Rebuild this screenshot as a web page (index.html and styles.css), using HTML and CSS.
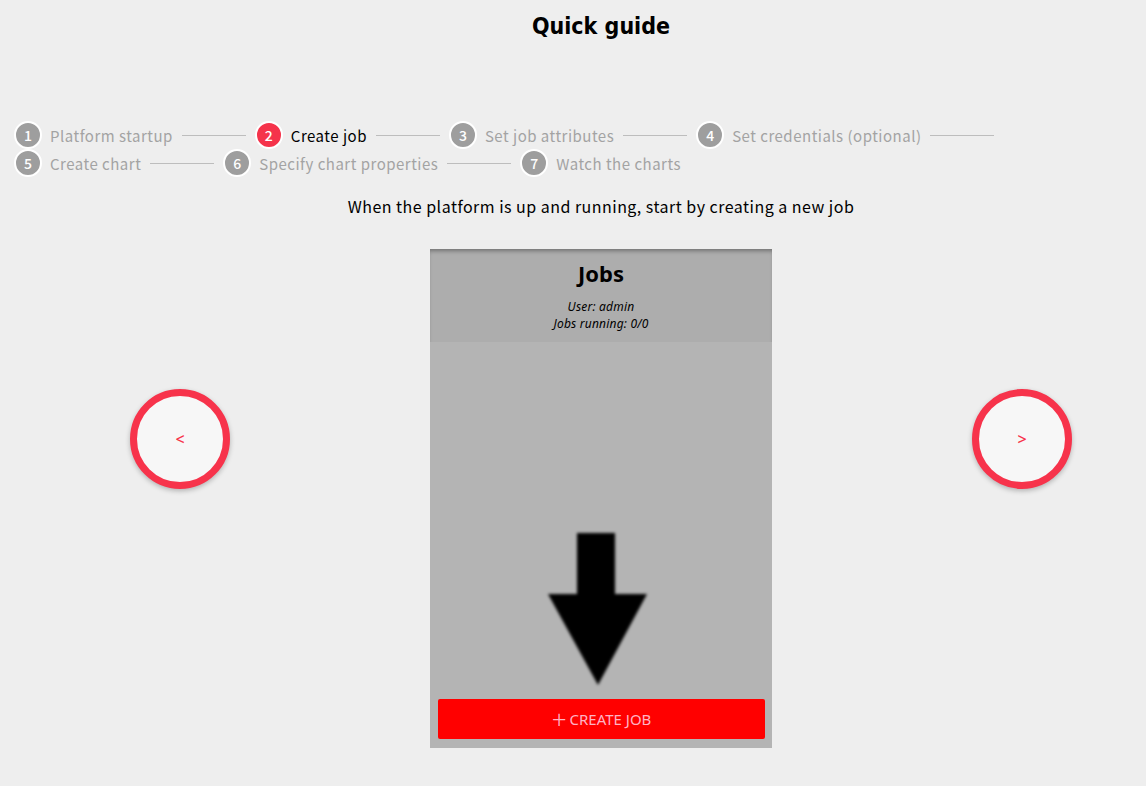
FILE: index.html
```html
<!DOCTYPE html>
<html>
<head>
<meta charset="utf-8">
<link rel="stylesheet" href="styles.css">
</head>
<body>
<div class="page">
  <h1 class="title">Quick guide</h1>
  <ol class="stepper">
    <li class="step"><span class="num">1</span><span class="label">Platform startup</span><span class="line"></span></li>
    <li class="step active"><span class="num">2</span><span class="label">Create job</span><span class="line"></span></li>
    <li class="step"><span class="num">3</span><span class="label">Set job attributes</span><span class="line"></span></li>
    <li class="step"><span class="num">4</span><span class="label">Set credentials (optional)</span><span class="line"></span></li>
    <li class="step"><span class="num">5</span><span class="label">Create chart</span><span class="line"></span></li>
    <li class="step"><span class="num">6</span><span class="label">Specify chart properties</span><span class="line"></span></li>
    <li class="step last"><span class="num">7</span><span class="label">Watch the charts</span></li>
  </ol>
  <div class="main">
    <p class="desc">When the platform is up and running, start by creating a new job</p>
    <div class="carousel">
      <button class="nav">&lt;</button>
      <div class="shot">
        <div class="shot-head">
          <div class="shot-title">Jobs</div>
          <div class="shot-meta">User: admin</div>
          <div class="shot-meta">Jobs running: 0/0</div>
        </div>
        <div class="shot-body">
          <svg class="arrow" width="120" height="170" viewBox="0 0 120 170">
            <polygon points="43,6 81,6 81,67 113,67 64,158 14,67 43,67" fill="#000"/>
          </svg>
          <div class="create-btn"><span class="plus">+</span>CREATE JOB</div>
        </div>
      </div>
      <button class="nav">&gt;</button>
    </div>
  </div>
</div>
</body>
</html>
```

FILE: styles.css
```css
html, body {
  margin: 0;
  padding: 0;
  background: #eeeeee;
}
body {
  font-family: "Noto Sans CJK JP", "Noto Sans", sans-serif;
  color: #000;
  width: 1146px;
  height: 786px;
  overflow: hidden;
}
.title {
  margin: 0;
  padding: 10px 0 0 56px;
  height: 32px;
  line-height: 32px;
  text-align: center;
  font-size: 23px;
  font-weight: 700;
  font-family: "DejaVu Sans Condensed", "DejaVu Sans", sans-serif;
}
.stepper {
  list-style: none;
  margin: 79px 0 0 0;
  padding: 0 14px;
  display: flex;
  flex-wrap: wrap;
}
.step {
  display: flex;
  align-items: center;
  height: 28px;
}
.num {
  width: 24px;
  height: 24px;
  border: 2px solid #fff;
  border-radius: 50%;
  background: #9e9e9e;
  color: #fff;
  font-size: 14px;
  font-weight: 500;
  display: flex;
  align-items: center;
  justify-content: center;
  flex: none;
}
.active .num {
  background: #f5334b;
}
.label {
  margin-left: 8px;
  font-size: 15px;
  letter-spacing: 0.5px;
  color: #a3a3a3;
  white-space: nowrap;
}
.active .label {
  color: #000;
}
.line {
  width: 64px;
  height: 1px;
  background: #bdbdbd;
  margin: 0 9px;
}
.main {
  padding-left: 56px;
}
.desc {
  margin: 17px 0 0 0;
  text-align: center;
  font-size: 16px;
  letter-spacing: 0.48px;
  line-height: 24px;
}
.carousel {
  display: flex;
  justify-content: space-between;
  align-items: flex-start;
  padding: 31px 74px 0 74px;
}
.nav {
  margin-top: 140px;
  width: 100px;
  height: 100px;
  border-radius: 50%;
  border: 7px solid #f7334b;
  background: #f7f7f7;
  color: #f7334b;
  font-family: "Noto Sans", sans-serif;
  font-size: 16px;
  font-weight: 500;
  box-shadow: 0 2px 5px rgba(0,0,0,0.25);
  padding: 0;
  box-sizing: border-box;
}
.shot {
  width: 342px;
  height: 499px;
  background: #b4b4b4;
  display: flex;
  flex-direction: column;
}
.shot-head {
  height: 93px;
  background: #adadad;
  text-align: center;
  box-shadow: inset 0 4px 4px -2px rgba(0,0,0,0.35);
}
.shot-title {
  padding-top: 9px;
  font-family: "Noto Sans", sans-serif;
  font-weight: 700;
  font-size: 22px;
  line-height: 30px;
  margin-bottom: 10px;
}
.shot-meta {
  font-family: "Noto Sans", sans-serif;
  font-style: italic;
  font-size: 12px;
  letter-spacing: 0.2px;
  line-height: 17px;
}
.shot-body {
  flex: 1;
  display: flex;
  flex-direction: column;
  align-items: center;
  justify-content: flex-end;
  padding: 0 7px 9px 8px;
}
.arrow {
  filter: blur(1.5px);
  margin-bottom: 2px;
  margin-left: -16px;
}
.create-btn {
  align-self: stretch;
  height: 40px;
  background: #ff0000;
  color: #ffb3c4;
  font-family: "Noto Sans", sans-serif;
  font-size: 15px;
  display: flex;
  align-items: center;
  justify-content: center;
  border-radius: 2px;
}
.plus {
  font-size: 26px;
  font-weight: 300;
  margin-right: 3px;
  line-height: 1;
}
```
